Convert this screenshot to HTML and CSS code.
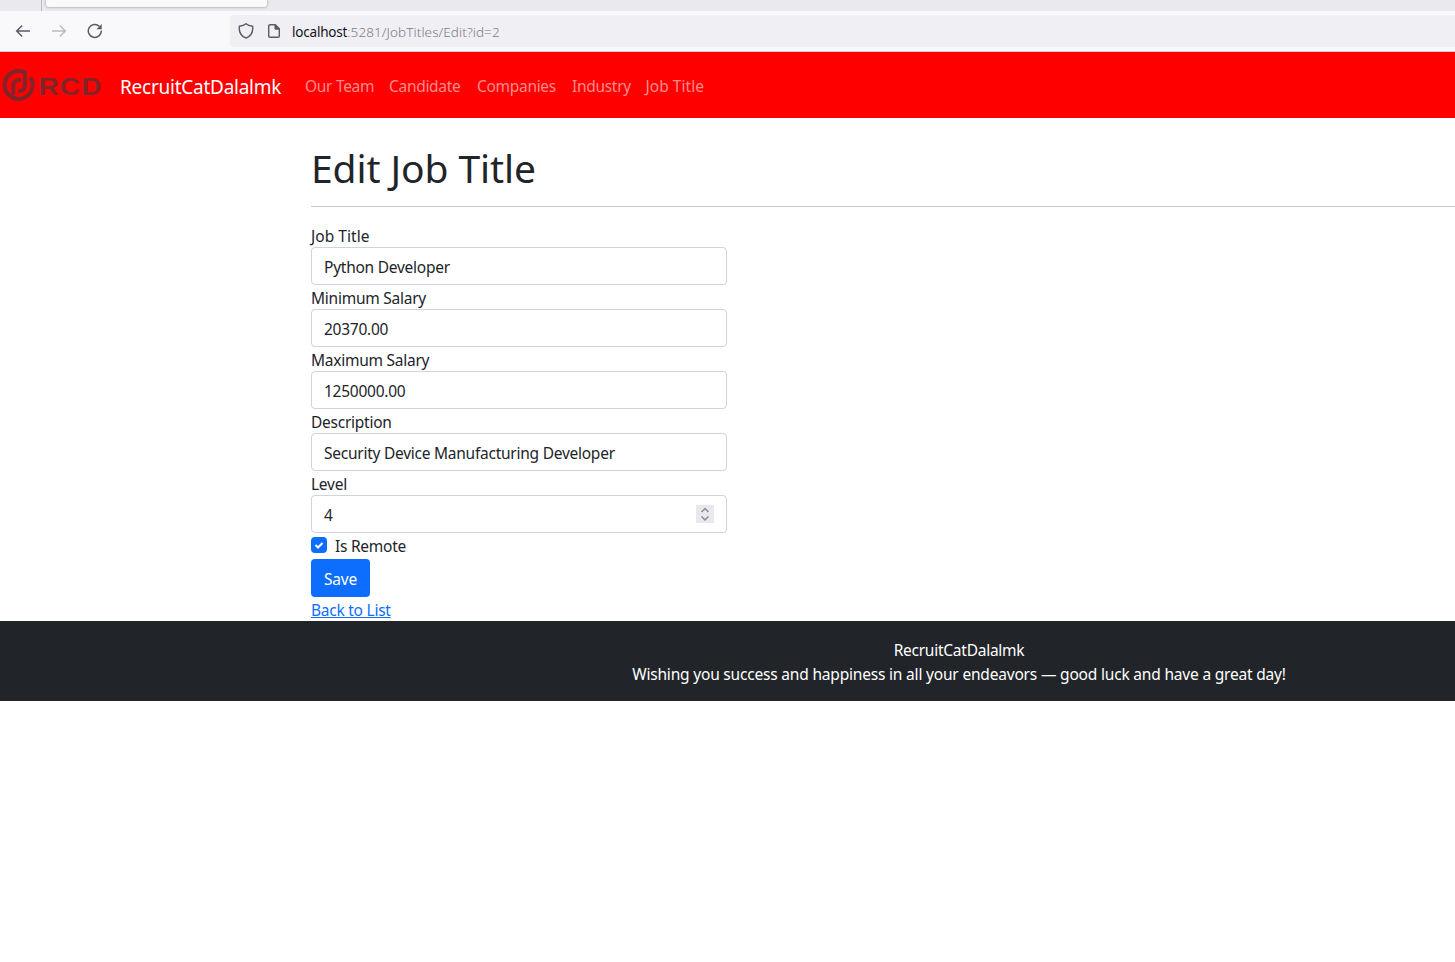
FILE: index.html
```html
<!DOCTYPE html>
<html lang="en">
<head>
<meta charset="utf-8">
<title>Edit Job Title</title>
<link rel="stylesheet" href="styles.css">
</head>
<body>
<div class="window">
  <div class="tabstrip"><div class="tab-divider"></div><div class="tab"></div></div>
  <div class="toolbar">
    <svg class="tool" viewBox="0 0 16 16"><path d="M15 8H1.5M7.2 2.500 1.700 8l5.500 5.500"/></svg>
    <svg class="tool disabled" viewBox="0 0 16 16"><path d="M1 8h13.5M8.8 2.500l5.500 5.500-5.500 5.500"/></svg>
    <svg class="tool" viewBox="0 0 16 16"><path d="M14.3 7.6A6.5 6.5 0 1 1 12.3 3.2"/><path class="solid" d="M14.7 1v5.3H9.4z"/></svg>
    <div class="urlbar">
      <svg class="shield" viewBox="0 0 16 16"><path d="M8 .8C6 2.6 3.600 3 1.400 3.200c-.8 5.800 1.600 9.800 6.600 12 5-2.200 7.400-6.200 6.600-12C12.400 3 10 2.600 8 .8z"/></svg>
      <svg class="page-icon" viewBox="0 0 16 16"><path d="M4 1.700h5.200l4.100 4.100v7.200a1.300 1.300 0 0 1-1.300 1.300H4A1.300 1.300 0 0 1 2.700 13V3A1.300 1.300 0 0 1 4 1.700z"/><path class="solid" d="M8.500 1.200h1l4.200 4.200v1.400H9.500a1 1 0 0 1-1-1z"/></svg>
      <div class="url"><span class="host">localhost</span>:5281/JobTitles/Edit?id=2</div>
    </div>
  </div>
  <nav class="navbar">
    <svg class="logo" viewBox="0 0 104 40">
      <path class="mark" d="M25 7.500A14 14 0 1 0 30.500 12.500"/>
      <path class="mark" d="M25 6V20.500a5.500 5.500 0 0 1-5.500 5.500H18"/>
      <path class="mark" d="M13.300 30V20.500a5.500 5.500 0 0 1 5.500-5.500H21"/>
      <text class="logo-text" x="38.500" y="29.500" textLength="64" lengthAdjust="spacingAndGlyphs">RCD</text>
    </svg>
    <a class="brand">RecruitCatDalalmk</a>
    <div class="links">
      <a class="n1">Our Team</a><a class="n2">Candidate</a><a class="n3">Companies</a><a class="n4">Industry</a><a class="n5">Job Title</a>
    </div>
  </nav>
  <main class="container">
    <h1>Edit Job Title</h1>
    <hr>
    <form class="form">
      <label class="job">Job Title</label><div class="control">Python Developer</div>
      <label>Minimum Salary</label><div class="control">20370.00</div>
      <label>Maximum Salary</label><div class="control">1250000.00</div>
      <label>Description</label><div class="control">Security Device Manufacturing Developer</div>
      <label>Level</label>
      <div class="control">4
        <svg class="spinner" viewBox="0 0 18 18"><path d="M5.500 7 9 3.700 12.500 7M5.500 11.500 9 14.800l3.500-3.300"/></svg>
      </div>
      <div class="check">
        <svg class="box" viewBox="0 0 16 16"><path d="m4.500 8 2.500 2.500 4.500-4.500"/></svg>
        <span>Is Remote</span>
      </div>
      <div class="save">Save</div>
      <div class="back"><a>Back to List</a></div>
    </form>
  </main>
  <footer class="footer">
    <div class="foot-name">RecruitCatDalalmk</div>
    <div class="foot-msg">Wishing you success and happiness in all your endeavors — good luck and have a great day!</div>
  </footer>
</div>
</body>
</html>
```
FILE: styles.css
```css
* { box-sizing: border-box; }
body { margin: 0; background: #fff; color: #212529; font: 15.5px/24px "Noto Sans", "Open Sans", sans-serif; letter-spacing: -.25px; }
svg { fill: none; flex: none; }
.tabstrip { height: 11px; background: #eae9ed; display: flex; align-items: flex-start; }
.tab-divider { width: 42px; height: 11px; border-right: 1px solid #bcbbc3; margin-right: 4px; }
.tab { width: 221px; height: 7px; background: #fafafb; border-radius: 0 0 3px 3px; box-shadow: 0 0 3px rgba(0,0,0,.4); }
.toolbar { height: 41px; background: #f9f9fb; border-bottom: 1px solid #ccccd4; display: flex; padding: 4px 0 0 15px; }
.tool { width: 16px; height: 16px; margin: 8px 20px 0 0; stroke: #5b5b66; stroke-width: 1.500; }
.disabled { stroke: #bbbbc1; }
.tool .solid, .page-icon .solid { fill: #5b5b66; stroke: none; }
.urlbar { margin-left: 107px; flex: 1; height: 32px; background: #f0eff4; border-radius: 4px 0 0 4px; display: flex; padding-left: 8px; }
.shield, .page-icon { width: 16px; height: 16px; margin-top: 8px; stroke: #5b5b66; stroke-width: 1.400; }
.page-icon { margin-left: 12px; }
.url { margin-left: 10px; font-size: 13.5px; line-height: 34px; font-weight: 300; color: #7d7d86; letter-spacing: .08px; }
.host { color: #15141a; font-weight: 400; letter-spacing: -.2px; }
.navbar { height: 66px; background: #f00; display: flex; align-items: center; }
.logo { width: 104px; height: 40px; }
.mark { stroke: #7f2529; stroke-width: 4; }
.logo-text { fill: #7f2529; font: 700 23px "Liberation Sans", sans-serif; letter-spacing: 1px; }
.brand { width: 169px; margin-left: 16px; color: #fff; font-size: 19px; line-height: 30px; padding-top: 3px; white-space: nowrap; }
.links { display: flex; padding: 2px 0 0 16px; color: #ff8c8c; white-space: nowrap; letter-spacing: -.3px; }
.n1 { width: 84px; } .n2 { width: 88px; } .n3 { width: 95px; } .n4 { width: 73.5px; }
.n5, .job { letter-spacing: .05px; }
.container { padding-left: 311px; height: 503px; }
h1 { margin: 0; padding-top: 26px; height: 88px; font-size: 39px; line-height: 48px; font-weight: 400; letter-spacing: -.1px; }
hr { margin: 0; height: 1px; border: 0; background: #c8c9ca; }
.form { width: 416px; padding-top: 16px; }
label { display: block; height: 24px; line-height: 26px; }
.control { height: 38px; border: 1px solid #ced4da; border-radius: 4px; padding: 0 12px; line-height: 38px; display: flex; justify-content: space-between; white-space: nowrap; }
.spinner { width: 18px; height: 18px; margin-top: 9px; background: #e9e9ed; stroke: #8f8f9d; stroke-width: 1.600; }
.check { height: 26px; display: flex; line-height: 27px; }
.box { width: 16px; height: 16px; margin: 4px 8px 0 0; background: #0d6efd; border-radius: 4px; stroke: #fff; stroke-width: 2; }
.save { width: 59px; height: 38px; background: #0d6efd; color: #fff; border-radius: 4px; text-align: center; line-height: 41px; }
.back { line-height: 26px; color: #0d6efd; text-decoration: underline; }
.footer { height: 80px; background: #212529; color: #fff; text-align: center; padding: 17px 0 0 463px; }
.foot-msg { letter-spacing: -.19px; }
```
